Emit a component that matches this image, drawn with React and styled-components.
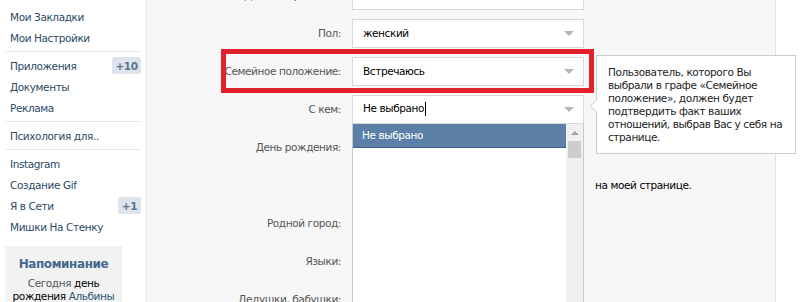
import React from 'react';
import styled, { createGlobalStyle } from 'styled-components';

const GlobalStyle = createGlobalStyle`
  html, body {
    margin: 0;
    padding: 0;
    background: #fff;
    overflow: hidden;
  }
  body {
    font-family: "DejaVu Sans", Tahoma, sans-serif;
    font-size: 10.5px;
    letter-spacing: -0.4px;
  }
`;

const Page = styled.div`
  display: flex;
  width: 800px;
  height: 302px;
  overflow: hidden;
`;

const Sidebar = styled.div`
  width: 147px;
  flex-shrink: 0;
  padding-top: 6px;
  background: #fff;
  border-right: 1px solid #e4e6e9;
  box-sizing: border-box;
`;

const MenuItem = styled.div`
  display: flex;
  align-items: center;
  justify-content: space-between;
  height: 21px;
  padding: 0 5px 0 10px;
  color: #2b4a66;
`;

const Badge = styled.span`
  display: flex;
  align-items: center;
  justify-content: center;
  height: 17px;
  min-width: ${(p) => (p.wide ? 29 : 23)}px;
  border-radius: 2px;
  background: #dde4eb;
  color: #5a7593;
  font-weight: bold;
`;

const Divider = styled.div`
  height: 1px;
  margin: 3px 6px 3px 5px;
  background: #e7e8ec;
`;

const Reminder = styled.div`
  margin: 9px 24px 0 5px;
  padding: 11px 4px 0;
  background: #f2f2f2;
  text-align: center;
  line-height: 13px;
  color: #2b587a;
  height: 70px;
`;

const ReminderTitle = styled.div`
  font-size: 12px;
  line-height: 14px;
  font-weight: bold;
  color: #45688e;
  margin-bottom: 6px;
`;

const Plain = styled.span`
  color: ${(p) => (p.dark ? '#000' : '#555')};
`;

const Content = styled.div`
  width: 628px;
  flex-shrink: 0;
  background: #f7f7f7;
  border-right: 1px solid #e1e3e6;
`;

const Form = styled.div`
  margin-top: -24px;
`;

const Row = styled.div`
  position: relative;
  display: grid;
  grid-template-columns: 194px 232px;
  column-gap: 11px;
  align-items: center;
  height: 38px;
`;

const Label = styled.div`
  text-align: right;
  color: #555;
`;

const Field = styled.div`
  position: relative;
`;

const Select = styled.div`
  display: flex;
  align-items: center;
  justify-content: space-between;
  height: 29px;
  box-sizing: border-box;
  padding: 0 9px 0 10px;
  background: #fff;
  border: 1px solid #d8d8d8;
  color: #000;
`;

const Arrow = styled.span`
  width: 0;
  height: 0;
  border-left: 5px solid transparent;
  border-right: 5px solid transparent;
  border-top: 5px solid #b6b6b6;
`;

const Caret = styled.span`
  display: inline-block;
  width: 1px;
  height: 14px;
  margin-left: 1px;
  background: #000;
  vertical-align: middle;
`;

const Menu = styled.div`
  position: absolute;
  top: 100%;
  left: 0;
  width: 232px;
  height: 200px;
  box-sizing: border-box;
  display: flex;
  background: #fff;
  border-left: 1px solid #c8c8c8;
  border-right: 1px solid #c8c8c8;
  z-index: 3;
`;

const Options = styled.div`
  flex: 1;
`;

const Option = styled.div`
  height: 23px;
  display: flex;
  align-items: center;
  padding-left: 9px;
  color: ${(p) => (p.active ? '#fff' : '#000')};
  background: ${(p) => (p.active ? '#5b7fa6' : '#fff')};
  border-bottom: ${(p) => (p.active ? '1px solid #3e5f85' : 'none')};
`;

const ScrollBar = styled.div`
  width: 17px;
  background: #f0f0f0;
  display: flex;
  flex-direction: column;
  align-items: center;
  padding-top: 7px;
  box-sizing: border-box;
`;

const UpArrow = styled.span`
  width: 0;
  height: 0;
  border-left: 4px solid transparent;
  border-right: 4px solid transparent;
  border-bottom: 4px solid #a3a3a3;
`;

const Thumb = styled.div`
  width: 13px;
  height: 17px;
  margin-top: 6px;
  background: #cdcdcd;
`;

const Highlight = styled.div`
  position: absolute;
  left: 74px;
  top: -3px;
  width: 373px;
  height: 44px;
  box-sizing: border-box;
  border: 5px solid #e3202b;
  pointer-events: none;
  z-index: 2;
`;

const Tooltip = styled.div`
  position: absolute;
  left: calc(100% + 12px);
  top: -2px;
  width: 200px;
  box-sizing: border-box;
  padding: 10px 6px 9px 11px;
  background: #fff;
  border: 1px solid #c5ced8;
  line-height: 13px;
  white-space: nowrap;
  color: #222;
  z-index: 4;

  &::before,
  &::after {
    content: '';
    position: absolute;
    top: 44px;
    width: 0;
    height: 0;
    border-top: 6px solid transparent;
    border-bottom: 6px solid transparent;
  }
  &::before {
    left: -7px;
    border-right: 6px solid #c5ced8;
  }
  &::after {
    left: -6px;
    border-right: 6px solid #fff;
  }
`;

const DateSelects = styled.div`
  display: flex;
  gap: 6px;
  & > * {
    flex: 1;
  }
`;

const CheckLine = styled.div`
  display: flex;
  white-space: nowrap;
  color: #000;
`;

const Hidden = styled.span`
  width: 243px;
  flex-shrink: 0;
  overflow: hidden;
`;

const Input = styled.div`
  height: 29px;
  box-sizing: border-box;
  background: #fff;
  border: 1px solid #d8d8d8;
`;

const Rest = styled.div`
  flex: 1;
  background: #fff;
`;

const menu = [
  { text: 'Мои Закладки' },
  { text: 'Мои Настройки' },
  'div',
  { text: 'Приложения', badge: '+10' },
  { text: 'Документы' },
  { text: 'Реклама' },
  'div',
  { text: 'Психология для..' },
  'div',
  { text: 'Instagram' },
  { text: 'Создание Gif' },
  { text: 'Я в Сети', badge: '+1' },
  { text: 'Мишки На Стенку' },
];

export default function App() {
  return (
    <>
      <GlobalStyle />
      <Page>
        <Sidebar>
          {menu.map((m, i) =>
            m === 'div' ? (
              <Divider key={i} />
            ) : (
              <MenuItem key={i}>
                <span>{m.text}</span>
                {m.badge && <Badge wide={m.badge.length > 2}>{m.badge}</Badge>}
              </MenuItem>
            )
          )}
          <Reminder>
            <ReminderTitle>Напоминание</ReminderTitle>
            <Plain>Сегодня</Plain> <Plain dark>день</Plain>
            <br />
            <Plain dark>рождения</Plain> Альбины
          </Reminder>
        </Sidebar>
        <Content>
          <Form>
            <Row>
              <Label>Девичья фамилия:</Label>
              <Field>
                <Input />
              </Field>
            </Row>
            <Row>
              <Label>Пол:</Label>
              <Field>
                <Select>
                  женский
                  <Arrow />
                </Select>
              </Field>
            </Row>
            <Row>
              <Highlight />
              <Label>Семейное положение:</Label>
              <Field>
                <Select>
                  Встречаюсь
                  <Arrow />
                </Select>
                <Tooltip>
                  Пользователь, которого Вы
                  <br />
                  выбрали в графе «Семейное
                  <br />
                  положение», должен будет
                  <br />
                  подтвердить факт ваших
                  <br />
                  отношений, выбрав Вас у себя на
                  <br />
                  странице.
                </Tooltip>
              </Field>
            </Row>
            <Row>
              <Label>С кем:</Label>
              <Field>
                <Select>
                  <span>
                    Не выбрано
                    <Caret />
                  </span>
                  <Arrow />
                </Select>
                <Menu>
                  <Options>
                    <Option active>Не выбрано</Option>
                    <Rest />
                  </Options>
                  <ScrollBar>
                    <UpArrow />
                    <Thumb />
                  </ScrollBar>
                </Menu>
              </Field>
            </Row>
            <Row>
              <Label>День рождения:</Label>
              <Field>
                <DateSelects>
                  <Select>
                    1<Arrow />
                  </Select>
                  <Select>
                    Января<Arrow />
                  </Select>
                  <Select>
                    1990<Arrow />
                  </Select>
                </DateSelects>
              </Field>
            </Row>
            <Row>
              <Label />
              <CheckLine>
                <Hidden>Показывать дату рождения</Hidden>
                на моей странице.
              </CheckLine>
            </Row>
            <Row>
              <Label>Родной город:</Label>
              <Field>
                <Input />
              </Field>
            </Row>
            <Row>
              <Label>Языки:</Label>
              <Field>
                <Input />
              </Field>
            </Row>
            <Row>
              <Label>Дедушки, бабушки:</Label>
              <Field>
                <Input />
              </Field>
            </Row>
          </Form>
        </Content>
      </Page>
    </>
  );
}
